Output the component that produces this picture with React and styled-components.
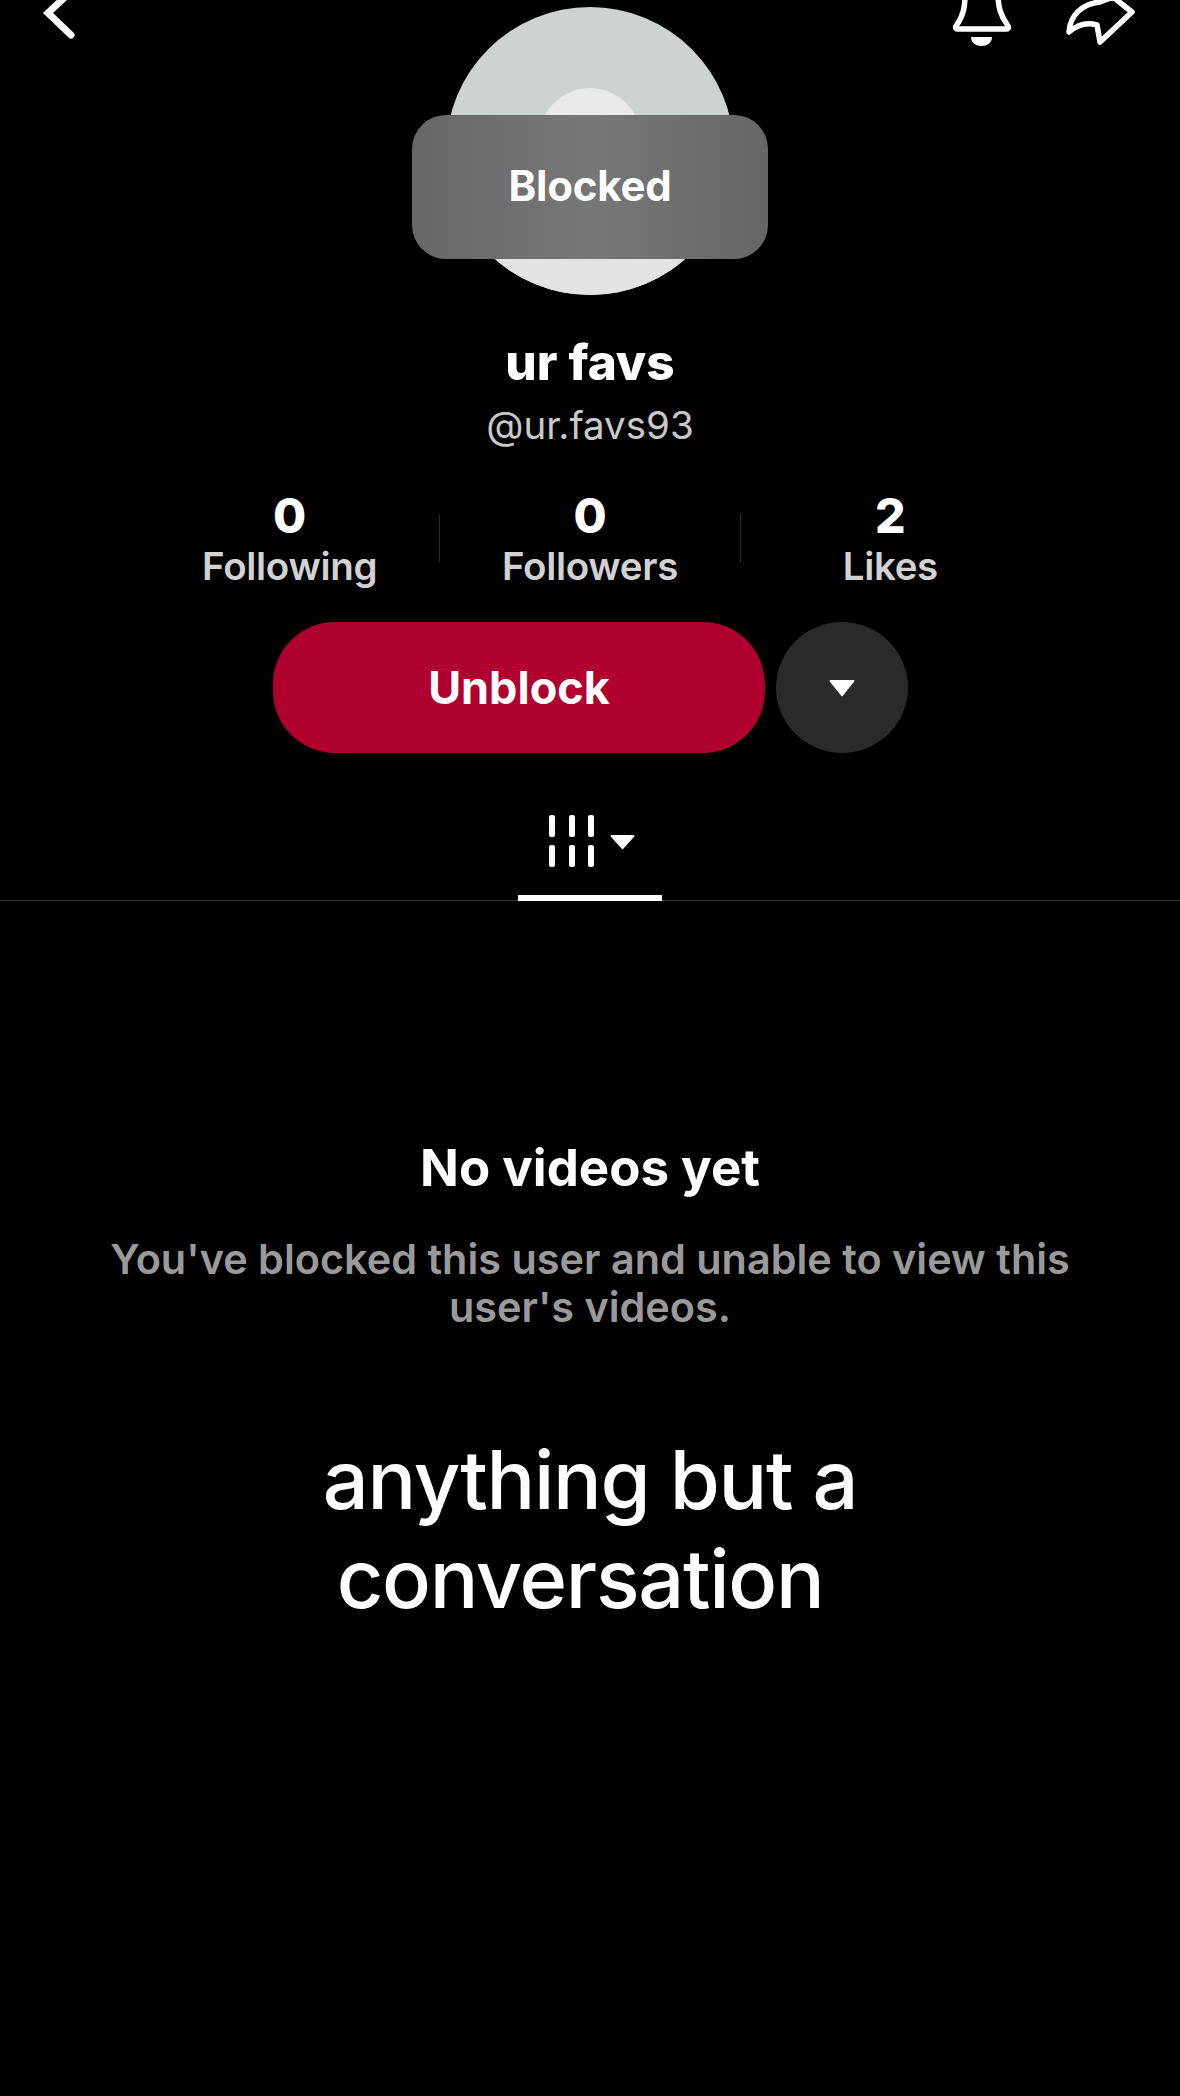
import React from "react";
import styled, { createGlobalStyle } from "styled-components";

const GlobalStyle = createGlobalStyle`
  html, body {
    margin: 0;
    padding: 0;
    background: #000;
  }
  body {
    font-family: Inter, "Liberation Sans", sans-serif;
  }
`;

const stats = [
  { value: "0", label: "Following" },
  { value: "0", label: "Followers" },
  { value: "2", label: "Likes" },
];

const App = () => {
  return (
    <Page>
      <GlobalStyle />
      <TopBar>
        <BackIcon />
        <AvatarWrap>
          <AvatarArt />
          <BlockedBadge>Blocked</BlockedBadge>
        </AvatarWrap>
        <TopActions>
          <BellIcon />
          <ShareIcon />
        </TopActions>
      </TopBar>

      <Name>ur favs</Name>
      <Handle>@ur.favs93</Handle>

      <Stats>
        {stats.map((stat, i) => (
          <React.Fragment key={stat.label}>
            {i > 0 && <StatDivider />}
            <Stat>
              <StatValue>{stat.value}</StatValue>
              <StatLabel>{stat.label}</StatLabel>
            </Stat>
          </React.Fragment>
        ))}
      </Stats>

      <Actions>
        <UnblockButton>Unblock</UnblockButton>
        <MoreButton>
          <Caret width={26} height={18} />
        </MoreButton>
      </Actions>

      <TabBar>
        <Tab>
          <GridIcon />
        </Tab>
      </TabBar>

      <Empty>
        <EmptyTitle>No videos yet</EmptyTitle>
        <EmptyText>You've blocked this user and unable to view this user's videos.</EmptyText>
      </Empty>

      <Caption>
        <CaptionLine>anything but a</CaptionLine>
        <CaptionLine $shift={20}>conversation</CaptionLine>
      </Caption>
    </Page>
  );
};

export default App;

const Caret = ({ width, height }) => (
  <svg width={width} height={height} viewBox="0 0 26 18">
    <path d="M1.5 1h23a1 1 0 0 1 .8 1.6L13.8 16.8a1 1 0 0 1-1.6 0L.7 2.6A1 1 0 0 1 1.5 1z" fill="#fff" />
  </svg>
);

const BackIcon = () => (
  <BackSvg width="40" height="46" viewBox="0 0 40 46">
    <path d="M24 -3 L7 13 L30 35" fill="none" stroke="#fff" strokeWidth="7" strokeLinecap="round" strokeLinejoin="miter" />
  </BackSvg>
);

const BellIcon = () => (
  <svg width="62" height="48" viewBox="0 0 62 48">
    <path
      d="M14 -6 C14 6 13 15 5 26 C4 28 5 29 7 29 H55 C57 29 58 28 57 26 C49 15 47 6 47 -6"
      fill="none"
      stroke="#fff"
      strokeWidth="5.5"
      strokeLinejoin="round"
    />
    <path d="M20 37 H41 C41 43 36 46 30.5 46 C25 46 20 43 20 37 Z" fill="#fff" />
  </svg>
);

const ShareIcon = () => (
  <svg width="72" height="48" viewBox="0 0 72 48">
    <path
      d="M3 32 C4 15 16 4 34 2 L47 -3 L66 12 L34 42 L31 25 C21 22 11 25 3 32 Z"
      fill="none"
      stroke="#fff"
      strokeWidth="5.5"
      strokeLinejoin="round"
    />
  </svg>
);

const AvatarArt = () => (
  <svg width="288" height="288" viewBox="0 0 288 288">
    <defs>
      <clipPath id="avatar-clip">
        <circle cx="144" cy="144" r="144" />
      </clipPath>
    </defs>
    <g clipPath="url(#avatar-clip)">
      <rect width="288" height="288" fill="#cfd2d3" />
      <circle cx="144" cy="132" r="51" fill="#e9e9e9" />
      <ellipse cx="144" cy="300" rx="150" ry="110" fill="#e3e3e3" />
    </g>
  </svg>
);

const GridIcon = () => (
  <svg width="86" height="52" viewBox="0 0 86 52">
    <g fill="#fff">
      <rect x="0" y="0" width="6" height="22" rx="2" />
      <rect x="20" y="0" width="6" height="22" rx="2" />
      <rect x="39" y="0" width="6" height="22" rx="2" />
      <rect x="0" y="30" width="6" height="22" rx="2" />
      <rect x="20" y="30" width="6" height="22" rx="2" />
      <rect x="39" y="30" width="6" height="22" rx="2" />
      <path d="M62.5 20h22a1 1 0 0 1 .8 1.6L74.3 33.8a1 1 0 0 1-1.6 0L61.7 21.6a1 1 0 0 1 .8-1.6z" />
    </g>
  </svg>
);

const Page = styled.div`
  width: 1180px;
  height: 2096px;
  overflow: hidden;
  background: #000;
  color: #fff;
  display: flex;
  flex-direction: column;
  align-items: center;
`;

const TopBar = styled.header`
  width: 100%;
  display: grid;
  grid-template-columns: 1fr 288px 1fr;
  align-items: start;
  height: 295px;
`;

const BackSvg = styled.svg`
  margin-left: 41px;
`;

const TopActions = styled.div`
  display: flex;
  justify-content: flex-end;
  gap: 53px;
  padding-right: 42px;
`;

const AvatarWrap = styled.div`
  position: relative;
  width: 288px;
  height: 288px;
  margin-top: 7px;
`;

const BlockedBadge = styled.div`
  position: absolute;
  left: -34px;
  top: 108px;
  width: 356px;
  height: 144px;
  padding-bottom: 3px;
  box-sizing: border-box;
  border-radius: 34px;
  background: linear-gradient(90deg, #676767 0%, #777 50%, #666 100%);
  display: flex;
  align-items: center;
  justify-content: center;
  font-size: 42px;
  font-weight: 700;
  letter-spacing: -0.2px;
  color: #fff;
`;

const Name = styled.h1`
  margin: 39px 0 0;
  font-size: 49.5px;
  line-height: 56px;
  font-weight: 800;
  color: #fff;
`;

const Handle = styled.div`
  margin-top: 13px;
  font-size: 38.5px;
  line-height: 44px;
  font-weight: 400;
  color: #c9c9c9;
`;

const Stats = styled.div`
  width: 900px;
  display: flex;
  align-items: flex-start;
  margin-top: 44px;
`;

const Stat = styled.div`
  flex: 1;
  display: flex;
  flex-direction: column;
  align-items: center;
`;

const StatValue = styled.div`
  font-size: 48px;
  line-height: 50px;
  font-weight: 800;
`;

const StatLabel = styled.div`
  font-size: 38.5px;
  line-height: 50px;
  font-weight: 600;
  letter-spacing: -0.3px;
  color: #d2d2d2;
`;

const StatDivider = styled.div`
  width: 1px;
  height: 48px;
  margin-top: 23px;
  background: #2b2b2b;
`;

const Actions = styled.div`
  display: flex;
  gap: 11px;
  margin-top: 31px;
  padding-left: 1px;
`;

const UnblockButton = styled.button`
  width: 492px;
  height: 131px;
  border: none;
  border-radius: 62px;
  background: #b00030;
  color: #fff;
  font-family: inherit;
  font-size: 45px;
  font-weight: 700;
`;

const MoreButton = styled.button`
  width: 132px;
  height: 131px;
  padding: 0;
  border: none;
  border-radius: 50%;
  background: #2a2a2a;
  display: flex;
  align-items: center;
  justify-content: center;
`;

const TabBar = styled.nav`
  width: 100%;
  display: flex;
  justify-content: center;
  border-bottom: 1px solid #333;
  margin-top: 62px;
`;

const Tab = styled.div`
  width: 144px;
  height: 86px;
  margin-bottom: -1px;
  border-bottom: 6px solid #fff;
  display: flex;
  justify-content: center;
  align-items: flex-start;
  padding-left: 4px;
  box-sizing: border-box;
`;

const Empty = styled.section`
  margin-top: 237px;
  width: 1000px;
  text-align: center;
`;

const EmptyTitle = styled.h2`
  margin: 0;
  font-size: 51px;
  line-height: 60px;
  font-weight: 700;
  color: #fff;
`;

const EmptyText = styled.p`
  margin: 37px 0 0;
  font-size: 41.4px;
  line-height: 48px;
  font-weight: 600;
  color: #9a9a9a;
`;

const Caption = styled.div`
  margin-top: 100px;
  display: flex;
  flex-direction: column;
  align-items: center;
`;

const CaptionLine = styled.div`
  font-size: 81px;
  line-height: 99px;
  font-weight: 500;
  letter-spacing: -1.3px;
  color: #fff;
  padding-right: ${(p) => p.$shift || 0}px;
`;
